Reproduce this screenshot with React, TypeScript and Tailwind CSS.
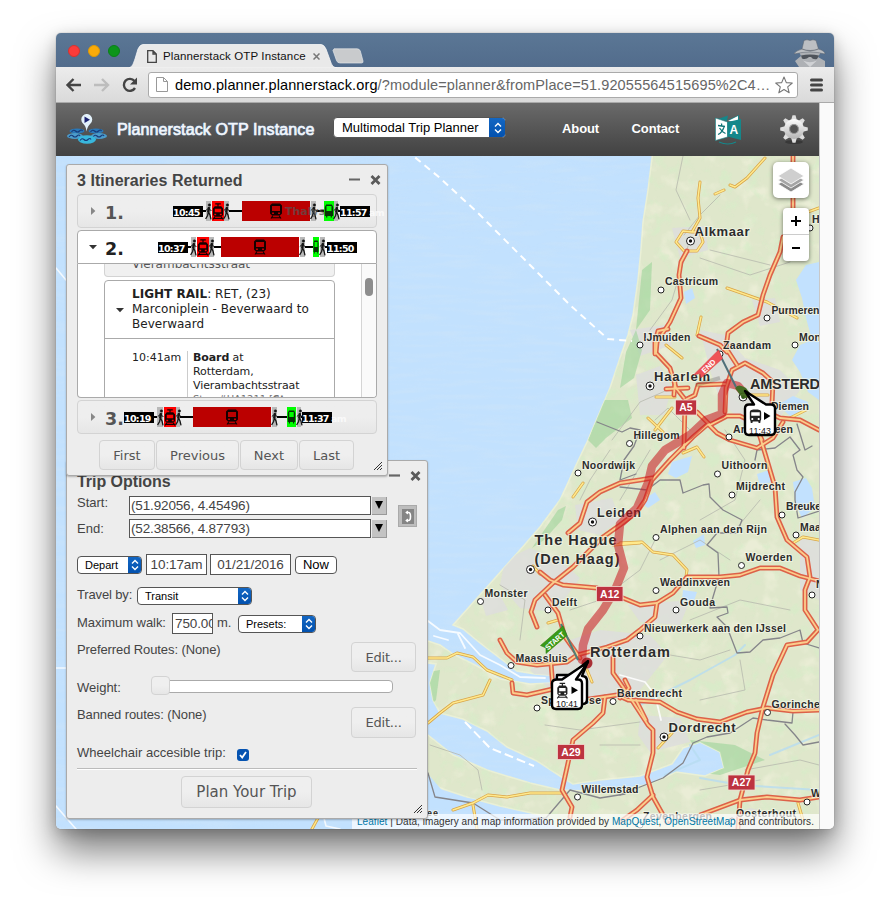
import React from "react";
import { MdDirectionsBus } from "react-icons/md";

const WATER = "#c2e1fe";

const LAND =
  "M653 150 L648 190 L643 222 L641 250 L638 280 L633 315 L628 335 L622 352 L610 388 L593 428 L588 440 L577 463 L560 500 L540 527 L520 550 L487 587 L453 625 L463 629 L480 643 L497 656 L517 671 L535 674 L575 677 L575 682 L530 684 L500 679 L477 666 L453 654 L440 645 L428 641 L420 643 L420 662 L436 664 L430 683 L433 700 L440 713 L463 719 L487 731 L507 747 L537 761 L560 776 L573 784 L600 780 L640 776 L672 764 L683 748 L700 742 L720 752 L724 768 L705 776 L676 772 L650 784 L610 792 L560 790 L530 783 L487 770 L453 755 L428 735 L420 730 L420 772 L440 788 L470 798 L500 806 L540 815 L560 829 L830 829 L830 150 Z";

const SEAS = [
  "M806 265 L819 262 L819 400 L808 392 L800 372 L792 360 L800 345 L812 340 L806 318 L802 298 L796 280 Z",
  "M428 774 L446 795 L474 799 L505 812 L515 829 L480 829 L470 810 L420 806 Z",
  "M793 482 L806 478 L812 488 L815 508 L802 518 L796 505 Z",
  "M672 462 L692 456 L688 472 L676 478 L668 474 Z",
  "M757 474 L769 470 L771 482 L760 486 Z",
  "M683 590 L697 592 L693 604 L682 600 Z",
  "M684 292 L692 288 L695 298 L686 304 Z",
  "M640 502 L655 492 L660 500 L648 508 Z",
  "M693 541 L704 534 L705 545 L696 548 Z",
  "M778 405 L793 396 L808 402 L806 412 L790 416 Z",
];

const URBAN = [
  "M700 330 L725 335 L745 358 L780 370 L800 390 L778 420 L745 425 L720 400 L710 370 Z",
  "M636 375 L660 366 L672 388 L664 415 L640 415 Z",
  "M505 560 L530 548 L560 560 L580 578 L555 612 L520 608 L500 585 Z",
  "M555 645 L600 630 L650 635 L668 655 L640 690 L590 700 L550 690 L530 670 Z",
  "M575 505 L612 498 L620 520 L600 535 L578 530 Z",
  "M672 228 L705 226 L708 250 L680 258 Z",
  "M640 715 L680 718 L690 742 L650 752 L638 735 Z",
  "M752 300 L775 298 L780 322 L760 326 Z",
  "M630 330 L665 325 L672 345 L640 356 Z",
  "M628 605 L690 600 L680 625 L640 622 Z",
  "M800 540 L819 538 L819 600 L800 590 Z",
  "M728 818 L750 808 L780 815 L775 829 L728 829 Z",
  "M480 597 L500 595 L508 610 L486 616 Z",
];

const WOODS = [
  "M604 400 L628 400 L632 418 L606 438 L596 448 L588 440 Z",
  "M636 330 L626 352 L620 388 L634 378 L642 350 Z",
  "M642 270 L652 262 L650 310 L636 330 Z",
  "M558 510 L566 506 L562 520 L544 540 L532 548 Z",
  "M428 672 L440 670 L436 700 L430 706 Z",
  "M514 756 L536 764 L542 776 L520 772 L505 764 Z",
  "M690 740 L735 745 L765 760 L720 775 L680 770 L700 758 Z",
];

const BORDERS = [
  "M620 487 L647 490 L660 480 L680 480 L683 493 L703 485 L709 484 L710 497 L723 510 L742 520 L737 533 L717 533 L707 545 L718 553 L719 577 L713 597 L710 608 L727 607 L728 613 L717 617 L727 627 L737 653 L750 652 L763 640 L780 638 L800 630 L803 643 L819 648",
  "M755 460 L757 450 L775 448 L790 437 L800 450 L793 455 L797 470 L803 477 L795 492 L795 500 L798 518 L819 511",
  "M797 424 L805 450 L812 446",
  "M620 795 L640 787 L663 778 L683 763 L693 743 L707 737 L730 733 L753 718 L767 720 L792 723 L793 712",
  "M785 724 L795 735 L803 745 L819 742",
  "M428 773 L435 797 L473 803 L500 820 L546 818 L570 790 L600 798 L625 794",
  "M597 422 L622 432 L630 428 L640 430 L634 446 L624 460 L620 480 L636 474",
];

const THIN = [
  "M683 156 L676 190 L690 220 M720 195 L700 215 L684 235 M688 246 L672 300 L650 330 M710 250 L770 265 M700 258 L750 275 L790 262",
  "M655 420 L668 408 L690 430 M672 388 L640 402 L612 440 M725 430 L745 460 L735 500 L700 520 M650 450 L620 500",
  "M500 585 L525 600 L520 640 M570 610 L600 600 L640 570 L655 540 M580 500 L590 480 L610 450",
  "M640 650 L700 660 L730 650 M700 700 L745 690 L740 660 M430 745 L460 755 L478 770 L482 790",
  "M545 725 L580 730 L640 722 M600 745 L640 745 M660 560 L700 540 L730 560 M690 620 L740 600 L790 610",
  "M760 500 L735 530 M745 770 L800 760 L819 765 M700 790 L760 780",
];

const MOTORWAYS = [
  "M687 251 L681 262 L679 275 L681 298 L670 322 L657 342 L656 353 L670 368 L676 388 L684 398",
  "M668 329 L658 331 L655 342 L655 354",
  "M793 150 L793 212 M783 237 L780 252 L770 275 L763 295 L758 315 L743 322 L728 333 L726 348 L737 365",
  "M699 336 L720 345 L727 352",
  "M725 412 L726 388 L732 370 L745 363 L763 373 L773 382 L772 404 L767 418",
  "M666 389 L688 388 M675 380 L674 395",
  "M685 400 L695 395 L698 385 L725 384",
  "M685 400 L684 448 M697 412 L710 425 L727 416 L740 416 L753 422 L762 440",
  "M767 412 L780 418 L800 420 L819 430",
  "M708 424 L717 433 L730 440 L757 448 L773 438 L783 422",
  "M758 430 L767 460 L775 487 L777 517 L787 540 L807 557 L810 577 L805 590 L805 610 L818 630 L807 642 L787 645 L780 660 L773 675 L763 707 L757 733 L755 753 L748 770 L740 800 L738 829",
  "M708 424 L693 437 L670 460 L652 480 L645 500 L637 512 L620 525 L603 537 L587 553 L573 567 L553 583 L535 600 L531 612 L537 627",
  "M568 533 L580 523 L587 502 L600 492 L620 483 L640 480 L652 478",
  "M540 572 L550 580 L563 585 L597 588 L623 598 L640 605 L657 603 L673 593 L687 577 L720 577 L740 575 L760 568 L780 568 L800 576 L819 581",
  "M500 640 L507 653 L517 662 L537 665 L567 662 L577 655 L607 647 L627 640 L640 630 L655 617 L657 603",
  "M545 595 L558 613 L565 637 L580 658",
  "M512 683 L513 693 L527 695 L553 689 L583 700 L617 695 L628 700 L660 702 L677 712 L697 719 L720 722 L747 712 L767 708 L793 711 L819 710",
  "M551 663 L553 689 M613 657 L613 673 L623 687 L633 702 L648 725 L653 730 L653 753 L647 777 L653 797 L667 822",
  "M620 698 L629 688 L625 680 M636 700 L646 720",
  "M605 697 L603 713 L593 723 L573 740 L568 763 L562 790 L572 807 L570 817",
  "M653 795 L637 810 L620 822 M700 815 L740 800 L767 797 L800 800 L819 797",
];

const ROADS = [
  "M700 182 L698 198 L700 218 L692 232 L683 231 L676 242 L684 251 L697 251 L703 242 L700 232 L692 232",
  "M765 158 L747 178 L735 187 L730 185 M724 190 L715 194 M727 288 L767 302 L797 318 M701 317 L697 335",
  "M666 345 L682 358 M648 418 L663 432 M656 397 L675 397 M672 408 L655 430 M797 216 L819 208",
  "M620 543 L642 542 L653 552 L673 555 L687 570 L686 577 M683 453 L697 447 L704 457 M793 543 L803 537 L819 540 M583 483 L573 497 M613 545 L640 543",
  "M428 658 L447 658 L457 653 L473 657 L487 670 L512 680 M490 680 L483 695 L453 703 L440 713 L428 723",
  "M453 810 L473 803 L488 795 L507 797 L530 793 L562 793 M473 805 L477 829 M318 818 L312 829 M548 623 L558 620 M658 748 L672 733 M798 803 L803 820",
  "M587 670 L592 682 M533 566 L540 574 M790 418 L806 410 M745 395 L768 395",
];

type Town = [string, number, number, number, number, number?, number?];
// name, text x, baseline, text width, font size, dot x, dot y
const TOWNS: Town[] = [
  ["Castricum", 665, 285, 53, 10.5, 661, 290],
  ["Purmeren", 771.5, 313.5, 48, 10.5, 767, 318],
  ["IJmuiden", 643.5, 340.5, 47, 10.5, 640, 345],
  ["Mon", 799, 340.5, 22, 10.5, 795, 345],
  ["Zaandam", 723, 349, 48, 10.5, 720, 354],
  ["H", 812, 223, 8, 10.5, 810, 228],
  ["Diemen", 771, 409.5, 38, 10.5],
  ["Amstelveen", 733, 433, 60, 10.5, 729, 437],
  ["Hillegom", 633.5, 439, 46, 10.5, 629.5, 443.5],
  ["Noordwijk", 582, 468.5, 53, 10.5, 578, 473],
  ["Uithoorn", 721.5, 469, 46, 10.5, 717.5, 474],
  ["Mijdrecht", 736, 490, 49, 10.5, 732, 495],
  ["Breuke", 786, 510, 35, 10.5, 782, 515],
  ["Maar", 800, 530.5, 25, 10.5, 796, 535],
  ["Alphen aan den Rijn", 660, 532.5, 107, 10.5, 656, 537.5],
  ["Woerden", 745.5, 561, 47, 10.5, 741.5, 565.5],
  ["Waddinxveen", 660, 586, 70, 10.5, 656, 590.5],
  ["Gouda", 680, 605.5, 35, 10.5, 676, 610],
  ["Monster", 484.5, 597, 43, 10.5, 480.5, 601.5],
  ["Delft", 552, 605.5, 25, 10.5, 548, 610],
  ["Nieuwerkerk aan den IJssel", 644, 632, 142, 10.5, 640, 636],
  ["Maassluis", 515.5, 661.5, 52, 10.5, 511, 665.5],
  ["Spijkenisse", 541, 704, 60, 10.5, 537, 708],
  ["Barendrecht", 617, 697, 65, 10.5, 613, 701.5],
  ["Gorinchem", 771.5, 708, 58, 10.5, 767.5, 712.5],
  ["Willemstad", 581.5, 793, 57, 10.5, 577.5, 797],
  ["Oosterhout", 736, 817, 60, 10.5, 732, 821],
  ["Zevenbergen", 643, 820, 69, 10.5, 640, 825],
  ["W", 811, 797, 10, 10.5, 807, 802],
  ["N", 816, 588, 8, 10.5, 812, 595],
  ["ee", 427, 816, 11, 9],
];

const CITIES: Town[] = [
  ["Alkmaar", 694.5, 235.5, 55, 13, 690.5, 241],
  ["Haarlem", 654, 380.5, 56, 13, 650, 386],
  ["Leiden", 597, 516.5, 44, 12.5, 592.5, 522],
  ["Dordrecht", 668.5, 732, 67, 13, 664, 737],
  ["AMSTERDAM", 750, 389, 92, 14.5, 743, 397],
  ["The Hague", 534.5, 545, 82, 14.5, 530.5, 569.5],
  ["(Den Haag)", 534.5, 564, 85, 14.5],
  ["Rotterdam", 590, 657, 80, 14.5],
];

const ROUTE =
  "M745 394 L738 386 L727 383 L722 395 L722 414 L706 420 L690 435 L665 450 L652 466 L648 483 L637 508 L620 524 L618 545 L624 568 L615 590 L603 610 L588 629 L583 645 L582 660";

function Road({ d, casing, fill, outer, inner }: { d: string; casing: string; fill: string; outer: number; inner: number }) {
  return (
    <>
      <path d={d} stroke={casing} strokeWidth={outer} />
      <path d={d} stroke={fill} strokeWidth={inner} />
    </>
  );
}

function Shield({ x, y, w, label }: { x: number; y: number; w: number; label: string }) {
  return (
    <g>
      <rect x={x} y={y} width={w} height={15} fill="#bd3340" stroke="#f2dcd2" strokeWidth="0.8" />
      <text x={x + w / 2} y={y + 11.3} textAnchor="middle" fontSize="10.5" fontWeight="700" fill="#fff" fontFamily="Liberation Sans, sans-serif">
        {label}
      </text>
    </g>
  );
}

function TownLabel({ t, strong }: { t: Town; strong?: boolean }) {
  const [name, x, y, w, size, dx, dy] = t;
  return (
    <g>
      {dx !== undefined && (
        <>
          <circle cx={dx} cy={dy} r={strong ? 4 : 3} fill="#fff" stroke="#222" strokeWidth="1" />
          {strong && <circle cx={dx} cy={dy} r="1.7" fill="#111" />}
        </>
      )}
      <text
        x={x}
        y={y}
        textLength={w}
        fontSize={size}
        fontWeight="700"
        fill="#2c2c2c"
        stroke="#f3f6e8"
        strokeOpacity="0.75"
        strokeWidth="2"
        paintOrder="stroke"
        fontFamily="Liberation Sans, sans-serif"
      >
        {name}
      </text>
    </g>
  );
}

function TramGlyph({ color }: { color: string }) {
  return (
    <>
      <path d="M5 1 H11 M8 1 V4" stroke={color} strokeWidth="1.3" fill="none" />
      <path fillRule="evenodd" fill={color} d="M4.500 3.500 H11.500 L13.500 6 V13 L11.500 15 H4.500 L2.500 13 V6 Z M4.500 6.300 V10 H11.500 V6.300 Z M4 11.700 V13.300 H6 V11.700 Z M10 11.700 V13.300 H12 V11.700 Z" />
      <path d="M4.500 15 L2.500 18 M11.500 15 L13.500 18 M3.500 16.700 H12.500" stroke={color} strokeWidth="1.200" fill="none" />
    </>
  );
}

function TransitMap() {
  return (
    <svg width="763" height="673" viewBox="56 156 763 673" className="block">
      <defs>
        <filter id="waves" x="0" y="0" width="100%" height="100%">
          <feTurbulence type="fractalNoise" baseFrequency="0.025 0.19" numOctaves="2" seed="4" />
          <feColorMatrix values="0 0 0 0 0.62  0 0 0 0 0.78  0 0 0 0 0.94  0 2.6 0 0 -1.1" />
        </filter>
        <filter id="meadow" x="0" y="0" width="100%" height="100%">
          <feTurbulence type="fractalNoise" baseFrequency="0.075" numOctaves="4" seed="11" />
          <feColorMatrix values="0 0 0 0 0.68  0 0 0 0 0.84  0 0 0 0 0.58  0 4 0 0 -2.1" />
        </filter>
        <filter id="fields" x="0" y="0" width="100%" height="100%">
          <feTurbulence type="fractalNoise" baseFrequency="0.05" numOctaves="3" seed="23" />
          <feColorMatrix values="0 0 0 0 0.95  0 0 0 0 0.93  0 0 0 0 0.78  0 0 4 0 -2.1" />
        </filter>
        <clipPath id="land">
          <path d={LAND} />
        </clipPath>
      </defs>
      <rect x="56" y="156" width="763" height="673" fill={WATER} />
      <rect x="56" y="156" width="763" height="673" filter="url(#waves)" opacity="0.42" />
      <path d={LAND} fill="#dfe7cb" stroke="#eaf0d6" strokeWidth="1.5" />
      <g clipPath="url(#land)">
        <rect x="420" y="156" width="400" height="673" filter="url(#fields)" opacity="0.4" />
        <rect x="420" y="156" width="400" height="673" filter="url(#meadow)" opacity="0.75" />
        {URBAN.map((d) => (
          <path key={d} d={d} fill="#dddddd" opacity="0.8" />
        ))}
        {WOODS.map((d) => (
          <path key={d} d={d} fill="#9dd39a" opacity="0.6" />
        ))}
      </g>
      {SEAS.map((d) => (
        <path key={d} d={d} fill={WATER} />
      ))}
      <g fill="none" strokeLinecap="round" strokeLinejoin="round">
        <path d="M640 705 L690 680 L735 655 L745 645 M665 775 L700 760 L690 745 M700 778 L740 785 L819 790 M770 755 L819 735" stroke="#b7dcf0" strokeWidth="2" opacity="0.8" />
        <path d="M428 621 L440 630 L460 633 L480 655 L500 665 L520 677 L545 678 M620 675 L645 682 L655 695 L661 720 M458 634 L465 648 M434 636 L448 640" stroke="#fff" strokeWidth="1.8" opacity="0.85" />
        <path d="M406 150 L440 178 L477 212 L530 265 L570 305 L608 339 L632 341" stroke="#fff" strokeWidth="2" strokeDasharray="7 5" strokeLinecap="butt" />
        <path d="M465 722 L490 748 L534 766" stroke="#fff" strokeWidth="2" strokeDasharray="9 4" strokeLinecap="butt" />
        <path d="M56 268 L66 280 M56 668 L66 668 M56 806 L76 829 M324 818 L326 826 L340 829" stroke="#fff" strokeWidth="1.6" opacity="0.8" />
        {THIN.map((d) => (
          <path key={d} d={d} stroke="#b6b9ad" strokeWidth="0.8" />
        ))}
        {BORDERS.map((d) => (
          <path key={d} d={d} stroke="#85858a" strokeWidth="1.3" />
        ))}
        {ROADS.map((d) => (
          <Road key={d} d={d} casing="#d9a548" fill="#ffe98c" outer={3} inner={1.5} />
        ))}
        {MOTORWAYS.map((d) => (
          <path key={d} d={d} stroke="#dd6148" strokeWidth="4.9" />
        ))}
        {MOTORWAYS.map((d) => (
          <path key={d + "i"} d={d} stroke="#fbcd8c" strokeWidth="1.8" />
        ))}
      </g>
      {TOWNS.map((t) => (
        <TownLabel key={t[0]} t={t} />
      ))}
      {CITIES.map((t) => (
        <TownLabel key={t[0]} t={t} strong />
      ))}
      <Shield x={675.5} y={400} w={21} label="A5" />
      <Shield x={557.5} y={744.5} w={27} label="A29" />
      <Shield x={728} y={775} w={27} label="A27" />
      <path d={ROUTE} fill="none" stroke="#c8141e" strokeOpacity="0.55" strokeWidth="8.5" strokeLinejoin="round" strokeLinecap="round" />
      <Shield x={596.5} y={586.5} w={26.5} label="A12" />
      <path d="M735 388 Q738 383 746 388 L752 396 L743 399 Z" fill="#2c6b16" opacity="0.85" />
      <circle cx="587" cy="663" r="5.5" fill="#a01018" opacity="0.85" />

      {/* flag of the destination */}
      <path d="M717 349 L736 387" stroke="#4f6f79" strokeWidth="2" />
      <path d="M696 385 L720 378" stroke="#000" strokeOpacity="0.18" strokeWidth="4" />
      <path d="M693.5 375 L718.5 350 L722.5 358.5 L701 378 L700 373.5 Z" fill="#ee5357" stroke="#d93c40" strokeWidth="0.5" />
      <text transform="translate(704.5 373.5) rotate(-43)" textLength="16" lengthAdjust="spacingAndGlyphs" fontSize="7.5" fontWeight="700" fill="#fff" fontFamily="Liberation Sans, sans-serif">
        END
      </text>

      {/* flag of the origin */}
      <path d="M561 624 L578 660" stroke="#4f7f79" strokeWidth="2" />
      <path d="M540.5 645.5 L563 626 L567 635.5 L546 653.5 L546 648 Z" fill="#3a9a17" stroke="#2c8010" strokeWidth="0.6" />
      <text transform="translate(548 650.5) rotate(-42)" textLength="23" lengthAdjust="spacingAndGlyphs" fontSize="7.5" fontWeight="700" fill="#fff" fontFamily="Liberation Sans, sans-serif">
        START
      </text>

      {/* stop bubbles */}
      <g fill="#fff" stroke="#000" strokeWidth="2.4" strokeLinejoin="round">
        <path d="M557 675 H572 L588 661 L582 676 Q587 676 587 681 V699 Q587 704 583 704 H560 Q556 704 556 699 Z" />
        <path d="M557 679.5 H562 L588 662 L576 679.5 H578 Q582 679.5 582 683.5 V705 Q582 709 578 709 H556 Q552 709 552 705 V683.5 Q552 679.5 557 679.5 Z" />
        <path d="M749 404.5 H754 L745 391 L766 404.5 H771 Q775 404.5 775 408.5 V431 Q775 435 771 435 H749 Q745 435 745 431 V408.5 Q745 404.5 749 404.5 Z" />
      </g>
      <g transform="translate(555 682.500) scale(0.92 0.88)">
        <TramGlyph color="#222" />
      </g>
      <path d="M571.5 686.5 L578 690.3 L571.5 694 Z M764 412 L770.5 416 L764 420 Z" fill="#000" />
      <MdDirectionsBus x={747} y={408} width={17} height={17} size={17} color="#222" />
      <g fontSize="8.8" fill="#111" fontFamily="Liberation Sans, sans-serif">
        <text x="556" y="707.3" textLength="22">10:41</text>
        <text x="749" y="433.5" textLength="22">11:43</text>
      </g>
    </svg>
  );
}

type Seg = { k: "time" | "gap" | "line" | "walk" | "tram" | "train" | "bus"; w: number; t?: string; late?: string };

const TRIPS: { lead: number; segs: Seg[] }[] = [
  {
    lead: 95,
    segs: [
      { k: "time", w: 30, t: "10:45" }, { k: "line", w: 3 }, { k: "walk", w: 5 }, { k: "gap", w: 1 }, { k: "tram", w: 12 },
      { k: "walk", w: 5 }, { k: "line", w: 13 }, { k: "train", w: 68, late: "Thalys" }, { k: "gap", w: 1 }, { k: "walk", w: 5 },
      { k: "line", w: 8 }, { k: "bus", w: 10 }, { k: "walk", w: 4 }, { k: "line", w: 2 }, { k: "time", w: 30, t: "11:57", late: "am" },
    ],
  },
  {
    lead: 80,
    segs: [
      { k: "time", w: 30, t: "10:37" }, { k: "line", w: 3 }, { k: "walk", w: 5 }, { k: "gap", w: 1 }, { k: "tram", w: 12 },
      { k: "walk", w: 5 }, { k: "line", w: 7 }, { k: "train", w: 78 }, { k: "gap", w: 1 }, { k: "walk", w: 5 },
      { k: "line", w: 8 }, { k: "bus", w: 6 }, { k: "gap", w: 1 }, { k: "walk", w: 5 }, { k: "line", w: 2 }, { k: "time", w: 30, t: "11:50" },
    ],
  },
  {
    lead: 46,
    segs: [
      { k: "time", w: 30, t: "10:19" }, { k: "line", w: 3 }, { k: "walk", w: 6 }, { k: "gap", w: 1 }, { k: "tram", w: 12 },
      { k: "walk", w: 4 }, { k: "line", w: 13 }, { k: "train", w: 78 }, { k: "gap", w: 1 }, { k: "walk", w: 5 },
      { k: "line", w: 10 }, { k: "bus", w: 9 }, { k: "gap", w: 1 }, { k: "walk", w: 4 }, { k: "line", w: 1 }, { k: "time", w: 30, t: "11:37", late: "am" },
    ],
  },
];

function Segment({ s }: { s: Seg }) {
  const width = { width: s.w };
  switch (s.k) {
    case "time":
      return (
        <div style={width} className="relative flex h-[11px] shrink-0 items-center overflow-visible bg-black font-['DejaVu_Sans'] text-[9.5px] font-bold leading-[11px] tracking-[-0.7px] whitespace-nowrap text-white">
          <span className="relative top-px w-[29px] shrink-0">{s.t}</span>
          {s.late && <span className="relative top-px text-white/70">{s.late}</span>}
        </div>
      );
    case "line":
      return <div style={width} className="h-[1.5px] shrink-0 bg-black" />;
    case "walk":
      return (
        <div style={width} className="flex h-5 shrink-0 items-center justify-center bg-[#b9b9b9]">
          <svg width="7" height="17" viewBox="0 0 7 17" className="shrink-0" fill="none" stroke="#151515">
            <circle cx="4.400" cy="2" r="1.300" fill="#151515" strokeWidth="0.400" />
            <path d="M4 4 L3.200 9.500" strokeWidth="2.400" />
            <path d="M3.800 5 L0.800 7.500 M4 5.500 L6.400 8" strokeWidth="1" />
            <path d="M3.400 9 L2.600 12.500 L0.600 16 M3.400 9 L5 12 L6 16.300" strokeWidth="1.300" />
          </svg>
        </div>
      );
    case "tram":
      return (
        <div style={width} className="flex h-5 shrink-0 items-center justify-center bg-[#fe0000]">
          <svg width="12" height="17" viewBox="1.500 0 13 18.500" preserveAspectRatio="none" className="shrink-0">
            <TramGlyph color="#140000" />
          </svg>
        </div>
      );
    case "bus":
      return (
        <div style={width} className="flex h-5 shrink-0 items-center justify-center bg-[#00fe00]">
          <svg width={s.w} height="14" viewBox="0 0 12 14" preserveAspectRatio="none" className="shrink-0">
            <path fillRule="evenodd" fill="#053305" d="M2.500 0.500 H9.500 L11 3 V12 H9.500 V13.500 H8 V12 H4 V13.500 H2.500 V12 H1 V3 Z M3 2 V7 H9 V2 Z" />
          </svg>
        </div>
      );
    case "train":
      return (
        <div style={width} className="relative flex h-5 shrink-0 items-center justify-center bg-[#bb0000]">
          <svg width="14" height="16" viewBox="0 0 14 16">
            <path fillRule="evenodd" fill="#140000" d="M3 0.500 H11 L13 2.500 V10.500 L11 12.500 H3 L1 10.500 V2.500 Z M3 3 V8 H11 V3 Z M3 9.500 V11 H5 V9.500 Z M9 9.500 V11 H11 V9.500 Z" />
            <path d="M4 12.500 L2 15.500 M10 12.500 L12 15.500 M2.500 14.800 H11.500" stroke="#140000" strokeWidth="1.100" fill="none" />
          </svg>
          {s.late && <span className="absolute left-[43px] top-[3px] z-10 font-['DejaVu_Sans'] text-[11px] font-bold leading-[15px] text-[#555]/70">{s.late}</span>}
        </div>
      );
    default:
      return <div style={width} className="shrink-0" />;
  }
}

function TripBar({ i }: { i: number }) {
  return (
    <div className="absolute inset-y-0 flex items-center" style={{ left: TRIPS[i].lead }}>
      {TRIPS[i].segs.map((s, n) => (
        <Segment key={n} s={s} />
      ))}
    </div>
  );
}

function ItineraryHeader({ i, open }: { i: number; open?: boolean }) {
  return (
    <div
      className={
        open
          ? "relative flex h-[34px] items-center overflow-hidden rounded-t border border-[#aaa] bg-white"
          : "relative flex h-[34px] items-center rounded border border-[#d3d3d3] bg-linear-to-b from-[#eee] from-50% to-[#e6e6e6]"
      }
    >
      <svg width="8" height="8" viewBox="0 0 8 8" className="ml-[11px]">
        {open ? <path d="M0 2 H8 L4 6.2 Z" fill="#333" /> : <path d="M2 0 V8 L6.4 4 Z" fill="#888" />}
      </svg>
      <span className={open ? "ml-2 pt-1 font-['DejaVu_Sans'] text-[17.5px] font-bold text-[#212121]" : "ml-2 pt-1 font-['DejaVu_Sans'] text-[17.5px] font-bold text-[#555]"}>{i + 1}.</span>
      <TripBar i={i} />
    </div>
  );
}

function WindowButtons() {
  return (
    <svg width="33" height="12" viewBox="0 0 33 12">
      <path d="M1 5.500 H12" stroke="#666" strokeWidth="2.200" />
      <path d="M23.500 2 L31.500 10 M31.500 2 L23.500 10" stroke="#5a5a5a" strokeWidth="2.800" />
    </svg>
  );
}

function Grip() {
  return (
    <svg width="8" height="8" viewBox="0 0 8 8" className="absolute bottom-[5px] right-[5px]">
      <path d="M0 8 L8 0 M3 8 L8 3 M6 8 L8 6" stroke="#333" strokeWidth="1" />
    </svg>
  );
}

function SoftButton({ label, className }: { label: string; className: string }) {
  return (
    <button className={"flex items-center justify-center rounded border border-[#d3d3d3] bg-linear-to-b from-[#efefef] from-50% to-[#e6e6e6] pt-px font-['DejaVu_Sans'] text-[#555] " + className}>
      {label}
    </button>
  );
}

function ItinerariesWindow() {
  return (
    <section className="absolute left-[10px] top-[8px] z-20 flex h-[312px] w-[322px] flex-col rounded-[3px] border border-[#aaa] bg-[#ededed] px-[10px] shadow-[0_1px_2px_rgba(0,0,0,0.25)]">
      <header className="flex h-[29px] items-center justify-between">
        <h2 className="pt-[2px] text-[16px] font-bold tracking-[0.05px] whitespace-nowrap text-[#444]">3 Itineraries Returned</h2>
        <div className="-mr-[4px]"><WindowButtons /></div>
      </header>
      <div className="flex w-[300px] flex-col gap-[2px]">
        <ItineraryHeader i={0} />
        <div>
          <ItineraryHeader i={1} open />
          <div className="flex h-[134px] overflow-hidden rounded-b border border-t-0 border-[#aaa] bg-white font-['DejaVu_Sans'] text-[#212121]">
            <div className="flex-1 pl-[26px]">
              <div className="h-[13px] w-[231px] overflow-hidden rounded-b border border-t-0 border-[#d3d3d3] bg-[#f0f0f0]">
                <p className="-mt-[7px] pl-[27px] text-[12px] leading-[15px] text-[#555]">Vierambachtsstraat</p>
              </div>
              <div className="mt-[3px] w-[231px] rounded-t border border-[#aaa]">
                <div className="flex h-[58px] items-center border-b border-[#aaa]">
                  <svg width="8" height="8" viewBox="0 0 8 8" className="ml-[11px] shrink-0">
                    <path d="M0 2 H8 L4 6.2 Z" fill="#333" />
                  </svg>
                  <p className="ml-2 text-[12px] leading-[15px] tracking-[0.02px] whitespace-nowrap">
                    <b>LIGHT RAIL</b>: RET, (23)
                    <br />
                    Marconiplein - Beverwaard to
                    <br />
                    Beverwaard
                  </p>
                </div>
                <div className="flex pt-3 text-[11px] leading-[14px]">
                  <span className="w-[55px] shrink-0 pl-[27px]">10:41am</span>
                  <p className="ml-[27px] border-l border-[#ccc] pl-[5px] tracking-[-0.1px] whitespace-nowrap">
                    <b>Board</b> at
                    <br />
                    Rotterdam,
                    <br />
                    Vierambachtsstraat
                    <br />
                    <span className="text-[10px] text-[#777]">Stop #HA1211 [<b>St</b>op</span>
                  </p>
                </div>
              </div>
            </div>
            <div className="w-[15px] border-l border-[#d5d5d5] bg-[#fafafa] pl-[3px] pt-[14px]">
              <div className="h-[18px] w-2 rounded-full bg-[#8d8d8d]" />
            </div>
          </div>
        </div>
        <ItineraryHeader i={2} />
      </div>
      <div className="ml-[22px] mt-[6px] flex gap-px">
        <SoftButton label="First" className="h-[30px] w-[56px] text-[13px]" />
        <SoftButton label="Previous" className="h-[30px] w-[83px] text-[13px]" />
        <SoftButton label="Next" className="h-[30px] w-[58px] text-[13px]" />
        <SoftButton label="Last" className="h-[30px] w-[55px] text-[13px]" />
      </div>
      <Grip />
    </section>
  );
}

function MacSelect({ label, className, cap = "w-[14px]" }: { label: string; className: string; cap?: string }) {
  return (
    <div className={"flex shrink-0 items-stretch justify-between overflow-hidden rounded-[4px] border border-[#555] bg-white text-black " + className}>
      <span className="flex items-center pt-px whitespace-nowrap">{label}</span>
      <span className={"-my-px -mr-px flex items-center justify-center bg-linear-to-b from-[#1468c4] to-[#0250ae] " + cap}>
        <svg width="8" height="12" viewBox="0 0 8 12" fill="none" stroke="#fff" strokeWidth="1.4">
          <path d="M1 4.5 L4 1.5 L7 4.5 M1 7.5 L4 10.5 L7 7.5" />
        </svg>
      </span>
    </div>
  );
}

function PlaceRow({ label, value, className }: { label: string; value: string; className: string }) {
  return (
    <div className="flex h-[19px] items-center">
      <span className={"w-[52px] " + className}>{label}</span>
      <div className="flex h-[19px] w-[242px] items-center border border-[#555] bg-white pl-px pt-[2px] text-[13.5px] tracking-[-0.15px]">{value}</div>
      <div className="ml-px flex h-[18px] w-[15px] items-center justify-center border-b border-r border-[#999] bg-[#c3c3c3]">
        <svg width="8" height="8" viewBox="0 0 8 8">
          <path d="M0 0 H8 L4 8 Z" fill="#000" />
        </svg>
      </div>
    </div>
  );
}

function TripOptionsWindow() {
  return (
    <section className="absolute left-[10px] top-[304px] z-10 h-[359px] w-[362px] rounded-[3px] border border-[#aaa] bg-[#ededed] pl-[10px] pr-[10px] text-[13px] text-[#444] shadow-[0_1px_2px_rgba(0,0,0,0.25)]">
      <header className="flex h-[35px] justify-between">
        <h2 className="pt-[11px] text-[16px] font-bold leading-[20px] tracking-[-0.05px]">Trip Options</h2>
        <div className="-mr-[4px] pt-[9px]"><WindowButtons /></div>
      </header>
      <div className="flex">
        <div className="flex flex-col gap-[4px]">
          <PlaceRow label="Start:" value="(51.92056, 4.45496)" className="pb-[5px]" />
          <PlaceRow label="End:" value="(52.38566, 4.87793)" className="" />
        </div>
        <div className="ml-[11px] mt-[9px] flex h-[22px] w-[19px] items-center justify-center border border-[#aaa] bg-[#bdbdbd]">
          <svg width="12" height="15" viewBox="0 0 12 15">
            <rect width="12" height="15" fill="#858585" />
            <path d="M4 3.500 H6.500 Q8.500 3.500 8.500 7.500 Q8.500 11.500 6.500 11.500 H4" fill="none" stroke="#fff" strokeWidth="1.600" />
            <path d="M6 1.500 V5.500 L3.200 3.500 Z M6 9.500 V13.500 L3.200 11.500 Z" fill="#fff" />
          </svg>
        </div>
      </div>
      <div className="mt-[16px] flex h-[21px] items-center">
        <MacSelect label="Depart" className="h-[18px] w-[65px] pl-[7px] text-[11px]" />
        <div className="ml-1 flex h-[21px] w-[61px] items-center justify-center border border-[#555] bg-white pt-px text-[13.5px] tracking-[-0.1px]">10:17am</div>
        <div className="ml-[3px] flex h-[21px] w-[81px] items-center justify-center border border-[#555] bg-white pt-px text-[13.5px] tracking-[-0.1px]">01/21/2016</div>
        <button className="ml-1 flex h-[18px] w-[42px] items-center justify-center rounded-[4px] border border-[#555] bg-white text-[13px] text-black">Now</button>
      </div>
      <div className="mt-[11px] flex h-[20px] items-center">
        <span className="w-[60px] pb-[2px] tracking-[-0.15px] whitespace-nowrap">Travel by:</span>
        <MacSelect label="Transit" className="h-[18px] w-[115px] pl-[7px] text-[11px]" />
      </div>
      <div className="mt-[7px] flex h-[21px] items-center">
        <span className="w-[95px] pb-[2px] tracking-[-0.05px] whitespace-nowrap">Maximum walk:</span>
        <div className="flex h-[21px] w-[41px] items-center overflow-hidden border border-[#555] bg-white pl-[2px] pt-px text-[13.5px] tracking-[-0.1px]">750.00</div>
        <span className="ml-1 w-[21px] pb-px">m.</span>
        <MacSelect label="Presets:" className="h-[18px] w-[78px] pl-[7px] text-[11px]" />
      </div>
      <div className="mt-[8px] flex h-[30px] justify-between pr-px">
        <span className="text-[13px] tracking-[-0.1px] leading-[16px]">Preferred Routes: (None)</span>
        <SoftButton label="Edit..." className="h-[30px] w-[65px] text-[13px] tracking-[-0.2px]" />
      </div>
      <div className="mt-[4px] flex h-[20px] items-center">
        <span className="w-[74px] pt-[3px] text-[13px]">Weight:</span>
        <div className="relative flex h-[20px] w-[242px] items-center">
          <div className="h-[13px] w-full rounded-[4px] border border-[#aaa] bg-white" />
          <div className="absolute left-0 top-0 h-[19px] w-[19px] rounded border border-[#d3d3d3] bg-linear-to-b from-[#efefef] from-50% to-[#e6e6e6]" />
        </div>
      </div>
      <div className="mt-[11px] flex h-[31px] justify-between pr-px">
        <span className="text-[13px] tracking-[-0.1px] leading-[16px]">Banned routes: (None)</span>
        <SoftButton label="Edit..." className="h-[31px] w-[65px] text-[13px] tracking-[-0.2px]" />
      </div>
      <div className="mt-[5px] flex h-[20px] items-center">
        <span className="w-[160px] tracking-[0.03px] whitespace-nowrap">Wheelchair accesible trip:</span>
        <div className="mt-[4px] flex h-3 w-3 items-center justify-center rounded-[3px] bg-[#0553b1]">
          <svg width="10" height="10" viewBox="0 0 10 10" fill="none" stroke="#fff" strokeWidth="1.8">
            <path d="M2 5 L4.2 7.5 L8 2" />
          </svg>
        </div>
      </div>
      <div className="mt-[5px] h-[2px] w-[340px] border-b border-white bg-[#bbb]" />
      <div className="ml-[104px] mt-[6px]">
        <SoftButton label="Plan Your Trip" className="h-[32px] w-[131px] text-[15px]" />
      </div>
      <Grip />
    </section>
  );
}

function MapControls() {
  return (
    <>
      <div className="absolute left-[717px] top-[6px] flex h-[36px] w-[36px] items-center justify-center rounded-[5px] bg-white shadow-[0_1px_4px_rgba(0,0,0,0.5)]">
        <svg width="28" height="26" viewBox="0 0 28 26" stroke="#fff" strokeWidth="0.8">
          <path d="M1 17 L14 10 L27 17 L14 25 Z" fill="#8a8a8a" />
          <path d="M1 13 L14 6 L27 13 L14 21 Z" fill="#a5a5a5" />
          <path d="M1 9 L14 1 L27 9 L14 17 Z" fill="#cfcfcf" />
        </svg>
      </div>
      <div className="absolute left-[727px] top-[52px] flex h-[53px] w-[26px] flex-col rounded-[4px] bg-white text-black shadow-[0_1px_4px_rgba(0,0,0,0.5)]">
        <div className="flex flex-1 items-center justify-center border-b border-[#ccc]">
          <svg width="10" height="10" stroke="#000" strokeWidth="2"><path d="M0 5 H10 M5 0 V10" /></svg>
        </div>
        <div className="flex flex-1 items-center justify-center">
          <svg width="8" height="4" stroke="#000" strokeWidth="2"><path d="M0 2 H8" /></svg>
        </div>
      </div>
    </>
  );
}

function TitleBar() {
  return (
    <div className="relative flex h-[34px] shrink-0 items-end justify-between bg-linear-to-b from-[#5b7795] to-[#526c8c]">
      <div className="flex h-full items-end">
        <div className="mb-[10px] ml-3 flex gap-2">
          <span className="h-3 w-3 rounded-full border border-[#d8322f] bg-[#fc3b3a]" />
          <span className="h-3 w-3 rounded-full border border-[#e09a05] bg-[#fbab09]" />
          <span className="h-3 w-3 rounded-full border border-[#0b8018] bg-[#0c951b]" />
        </div>
        <div className="relative ml-[9px] h-[23px] w-[208px]">
          <svg width="208" height="24" viewBox="0 0 208 24" className="absolute inset-0">
            <path d="M0 24 C4 22 4 20 6 15 L9 5 Q11 0.5 14 0.5 H192 Q195 0.5 197 5 L201 16 C203 22 204 23 208 24 Z" fill="#e9e9e9" stroke="#f8f8f8" strokeWidth="0.8" />
          </svg>
          <div className="relative flex h-full items-center pl-[18px] pt-px text-[11.5px] text-[#111]">
            <svg width="10" height="13" viewBox="0 0 10 13" fill="none" stroke="#444" strokeWidth="1.3">
              <path d="M0.7 0.7 H6 L9.3 4 V12.3 H0.7 Z M6 0.7 V4 H9.3" />
            </svg>
            <span className="ml-[6px] w-[148px] pt-px tracking-[0.12px] whitespace-nowrap">Plannerstack OTP Instance</span>
            <svg width="7" height="7" viewBox="0 0 7 7" stroke="#777" strokeWidth="1.5" className="ml-[2px]">
              <path d="M0.5 0.5 L6.5 6.5 M6.5 0.5 L0.5 6.5" />
            </svg>
          </div>
        </div>
        <svg width="32" height="16" viewBox="0 0 32 16" className="-ml-[5px] mb-[3px]">
          <path d="M2 0.8 H25 Q27.5 0.8 28.3 3 L31 13 Q31.5 15 29.5 15 H8 Q5.5 15 4.5 12.5 L1 2.5 Z" fill="#c9cbcd" stroke="#e3e5e8" strokeWidth="0.7" />
        </svg>
      </div>
      <svg width="34" height="28" viewBox="0 0 34 28" className="mr-[7px]">
        <path d="M6 28 L2 22 L8 17 L6 13 H28 L25 18 L32 22 V28 Z" fill="#aeb1b5" />
        <path d="M9 10 L11 1.5 Q14 0 17 1.5 Q20 0 23 1.5 L25.5 10 Q32 12 32 15 Q17 11 1 15 Q2 12 9 10 Z" fill="#bcbfc3" stroke="#5c646e" strokeWidth="0.5" />
        <path d="M9 10 Q17 13.5 25.5 10" fill="none" stroke="#777d85" strokeWidth="1.3" />
        <path d="M8 16.5 Q17 14.5 26 16.5 L24 20 Q20 21 18 18 L16 18 Q13 21 9 19.5 Z" fill="#4f545b" />
        <path d="M10 21.5 L17 28 L24 21.5 Q17 25 10 21.5 Z" fill="#d0d2d5" />
      </svg>
    </div>
  );
}

function Toolbar() {
  return (
    <div className="flex h-[36px] shrink-0 items-center border-b border-[#aaa] bg-linear-to-b from-[#ececec] to-[#dadada] pl-[9px]">
      <svg width="76" height="20" viewBox="0 0 76 20" fill="none" strokeWidth="2.4">
        <path d="M16 10 H3 M8.5 4 L2.5 10 L8.5 16" stroke="#444" />
        <path d="M29 10 H43 M37 4 L43 10 L37 16" stroke="#bdbdbd" />
        <path d="M69.500 6 A6 6 0 1 0 70 13" stroke="#444" />
        <path d="M72 2.5 V9.500 H65 Z" fill="#444" />
      </svg>
      <div className="ml-[7px] flex h-[26px] w-[650px] items-center rounded-[3px] border border-[#aaa] bg-white pl-[7px]">
        <svg width="12" height="15" viewBox="0 0 12 15" fill="none" stroke="#999" strokeWidth="1">
          <path d="M0.5 0.5 H7.5 L11.5 4.5 V14.5 H0.5 Z M7.5 0.5 V4.5 H11.5" />
        </svg>
        <span className="ml-[7px] w-[600px] pt-[2px] text-[14.5px] tracking-[0.12px] whitespace-nowrap text-[#666]">
          <span className="text-black">demo.planner.plannerstack.org</span>/?module=planner&amp;fromPlace=51.92055564515695%2C4…
        </span>
        <svg width="18" height="18" viewBox="0 0 18 18" fill="none" stroke="#777" strokeWidth="1.1" strokeLinejoin="round">
          <path d="M9 1 L11.3 6.6 L17.3 7 L12.7 10.9 L14.2 16.8 L9 13.5 L3.8 16.8 L5.3 10.9 L0.7 7 L6.7 6.6 Z" />
        </svg>
      </div>
      <svg width="13" height="14" viewBox="0 0 13 14" stroke="#444" strokeWidth="3" strokeLinecap="round" className="ml-[12px]">
        <path d="M1.5 2 H11.5 M1.5 7 H11.5 M1.5 12 H11.5" />
      </svg>
    </div>
  );
}

function Petal({ x, y, rx, ry, fill }: { x: number; y: number; rx: number; ry: number; fill: string }) {
  return (
    <g>
      <ellipse cx={x} cy={y} rx={rx} ry={ry} fill={fill} />
      <path d={`M${x - rx + 2} ${y + 1} q2 -3 4 -1 t4 0 t3 0`} fill="none" stroke="#173b7a" strokeWidth="1.1" />
    </g>
  );
}

function AppHeader() {
  return (
    <header className="flex h-[53px] items-center bg-linear-to-b from-[#6a6a6a] to-[#424242] text-white">
      <svg width="42" height="32" viewBox="0 0 42 32" className="ml-[10px]">
        <Petal x={11} y={17} rx={7.5} ry={2.5} fill="#2a78b8" />
        <Petal x={30} y={17} rx={7.5} ry={2.5} fill="#2a78b8" />
        <Petal x={9} y={22} rx={8} ry={3} fill="#4b9ccc" />
        <Petal x={33} y={22} rx={8} ry={3} fill="#4b9ccc" />
        <Petal x={21} y={25.5} rx={9} ry={4.2} fill="#38b7dd" />
        <path d="M20.5 17.5 Q20 12 17 9.5 A5.5 5.5 0 1 1 24.5 9.5 Q21.5 12 20.5 17.5 Z" fill="#e3f2fb" />
        <path d="M18.500 2.500 L24 5.800 L18.500 9 Z" fill="#1c2370" />
      </svg>
      <h1 className="ml-[9px] w-[216px] pt-px text-[16px] tracking-[0.12px] whitespace-nowrap text-[#f1f6fc] [-webkit-text-stroke:0.7px_#f1f6fc] [text-shadow:0_0_2px_#5580b8]">Plannerstack OTP Instance</h1>
      <MacSelect label="Multimodal Trip Planner" className="-mt-1 h-[21px] w-[173px] pl-2 text-[13px]" cap="w-[17px]" />
      <nav className="-mt-[2px] ml-[56px] flex text-[13px] font-bold tracking-[-0.1px]">
        <a className="w-[69.5px]">About</a>
        <a className="w-[82.5px]">Contact</a>
      </nav>
      <svg width="28" height="31" viewBox="0 0 28 31" className="ml-0">
        <path d="M4 5 L14 1.5 L13 7 Z M25 1 L14 6 L25 8 Z" fill="#15878a" />
        <path d="M14 7 L24 2 V8 Z" fill="#fff" />
        <path d="M1.5 4 L13.5 8 V23 L1.5 26.5 Z" fill="#fff" stroke="#15878a" strokeWidth="0.6" />
        <path d="M13.5 8 L27 5 V26 L13.5 22.5 Z" fill="#15878a" />
        <path d="M4 11.5 L11 12.5 M7.5 9.5 L7.8 12 M10 13 Q8 19 4 20.5 M5.5 14 Q8 18 11.5 19.5" fill="none" stroke="#0f7376" strokeWidth="1.3" />
        <text x="15.5" y="19.5" fontSize="12" fontWeight="700" fill="#fff" fontFamily="Liberation Sans, sans-serif">A</text>
        <path d="M5 28 Q14 32 22 28" fill="none" stroke="#15878a" strokeWidth="1.2" />
      </svg>
      <svg width="30" height="31" viewBox="-15 -15 30 31" className="-mt-px ml-[37px]">
        <defs>
          <linearGradient id="steel" x1="0" y1="0" x2="0" y2="1">
            <stop offset="0" stopColor="#ffffff" />
            <stop offset="1" stopColor="#b4b4b4" />
          </linearGradient>
        </defs>
        <ellipse cx="0" cy="13" rx="9" ry="2" fill="#2b2b2b" opacity="0.6" />
        <g fill="#dedede">
          {[0, 45, 90, 135].map((a) => (
            <path key={a} d="M-2.8 -9 L-1.5 -13.800 H1.5 L2.8 -9 V9 L1.5 13.800 H-1.5 L-2.8 9 Z" transform={`rotate(${a})`} />
          ))}
          <circle r="10" fill="url(#steel)" />
        </g>
        <circle r="4.500" fill="#555" stroke="#999" strokeWidth="1.200" />
      </svg>
    </header>
  );
}

export default function App() {
  return (
    <main className="h-[909px] w-[890px] overflow-hidden bg-white font-['Liberation_Sans',Arial,sans-serif]">
      <div className="pl-[56px] pt-[33px]">
        <div className="flex h-[796px] w-[778px] flex-col overflow-hidden rounded-[5px] bg-[#fafafa] shadow-[0_0_1px_rgba(0,0,0,0.5),0_22px_38px_rgba(0,0,0,0.52),0_4px_14px_rgba(0,0,0,0.18)]">
          <TitleBar />
          <Toolbar />
          <div className="flex flex-1">
            <div className="w-[763px]">
              <AppHeader />
              <div className="relative h-[673px] overflow-hidden">
                <TransitMap />
                <ItinerariesWindow />
                <TripOptionsWindow />
                <MapControls />
                <div className="absolute bottom-0 right-0 flex h-[15px] w-[467px] items-center justify-end bg-white/70 pr-[5px] text-[10px] tracking-[0.06px] whitespace-nowrap text-[#333]">
                  <span>
                    <span className="text-[#0078a8]">Leaflet</span> | Data, imagery and map information provided by <span className="text-[#0078a8]">MapQuest</span>, <span className="text-[#0078a8]">OpenStreetMap</span> and contributors.
                  </span>
                </div>
              </div>
            </div>
            <div className="w-[15px] border-l border-[#c8c8c8] bg-[#fafafa]" />
          </div>
        </div>
      </div>
    </main>
  );
}
